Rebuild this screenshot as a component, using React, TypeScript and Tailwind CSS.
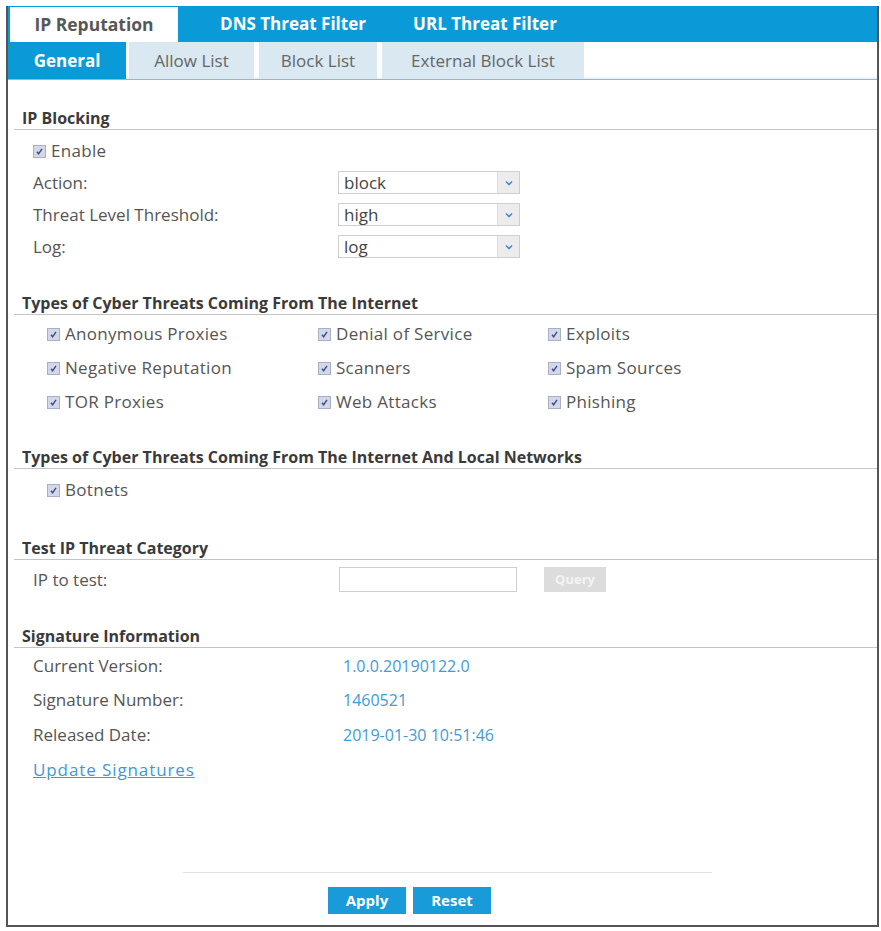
const font = { fontFamily: '"Open Sans", "Liberation Sans", sans-serif' };

const threats = [
  "Anonymous Proxies",
  "Denial of Service",
  "Exploits",
  "Negative Reputation",
  "Scanners",
  "Spam Sources",
  "TOR Proxies",
  "Web Attacks",
  "Phishing",
];

function Check({ label }: { label: string }) {
  return (
    <label className="flex h-[22px] items-center gap-[5px] text-[17px] tracking-[0.3px] text-[#555]">
      <span className="flex h-[13px] w-[13px] items-center justify-center border border-[#a8b0c6] bg-[#d3d8e8]">
        <svg width="9" height="9" viewBox="0 0 9 9">
          <path d="M2 4.8 L3.6 6.8 L7 1.8" fill="none" stroke="#3b4a86" strokeWidth="1.4" />
        </svg>
      </span>
      {label}
    </label>
  );
}

function Select({ value }: { value: string }) {
  return (
    <div className="flex h-[23px] w-[182px] border border-[#cfcfcf] bg-white">
      <div className="flex flex-1 items-center pl-[5px] text-[17px] text-[#444]">{value}</div>
      <div className="flex w-[22px] items-center justify-center border-l border-[#dedede] bg-[#ececec]">
        <svg width="8" height="6" viewBox="0 0 8 6">
          <path d="M1 1.5 L4 4.5 L7 1.5" fill="none" stroke="#3c8fd0" strokeWidth="1.6" />
        </svg>
      </div>
    </div>
  );
}

function Heading({ title, top }: { title: string; top: string }) {
  return (
    <div className={`${top} ml-[6px] flex h-[20px] items-end border-b border-[#c4c4c4] pb-[1px] pl-[8px] text-[16px] font-bold leading-[19px] text-[#3a3a3a]`}>
      {title}
    </div>
  );
}

function InfoRow({ label, value, top }: { label: string; value: string; top: string }) {
  return (
    <div className={`${top} flex h-[22px] items-center pl-[25px] text-[17px]`}>
      <span className="w-[310px] text-[#555]">{label}</span>
      <span className="text-[16px] text-[#3f9bd6]">{value}</span>
    </div>
  );
}

export default function App() {
  return (
    <div className="h-[931px] w-[881px] overflow-hidden bg-white pt-[6px]" style={font}>
      <div className="ml-[6px] flex h-[921px] w-[873px] flex-col border-x-2 border-b-2 border-[#555]">
        {/* top tabs */}
        <div className="flex h-[36px] bg-[#0b9ad8]">
          <div className="ml-[2px] mt-[1px] flex w-[168px] items-center justify-center bg-white text-[17.5px] font-bold text-[#575757]">
            IP Reputation
          </div>
          <div className="flex w-[230px] items-center justify-center text-[17px] font-bold text-white">
            DNS Threat Filter
          </div>
          <div className="flex w-[154px] items-center justify-center text-[17px] font-bold text-white">
            URL Threat Filter
          </div>
        </div>

        {/* sub tabs */}
        <div className="flex h-[38px] border-b border-[#9fb3c2] shadow-[inset_0_-3px_3px_-2px_#d7ecf7]">
          <div className="flex w-[118px] items-center justify-center bg-[#0b9ad8] text-[17px] font-bold text-white">
            General
          </div>
          <div className="ml-[3px] flex w-[125px] items-center justify-center bg-[#dae8f2] text-[17px] text-[#666]">
            Allow List
          </div>
          <div className="ml-[5px] flex w-[118px] items-center justify-center bg-[#dae8f2] text-[17px] text-[#666]">
            Block List
          </div>
          <div className="ml-[5px] flex w-[202px] items-center justify-center bg-[#dae8f2] text-[17px] text-[#666]">
            External Block List
          </div>
        </div>

        <Heading title="IP Blocking" top="mt-[30px]" />
        <div className="mt-[10px] pl-[25px]">
          <Check label="Enable" />
        </div>
        {[
          ["Action:", "block"],
          ["Threat Level Threshold:", "high"],
          ["Log:", "log"],
        ].map(([label, value]) => (
          <div key={label} className="mt-[9px] flex h-[23px] items-center pl-[25px] text-[17px] text-[#555]">
            <span className="w-[305px]">{label}</span>
            <Select value={value} />
          </div>
        ))}

        <Heading title="Types of Cyber Threats Coming From The Internet" top="mt-[37px]" />
        <div className="mt-[8px] grid grid-cols-[271px_230px_200px] gap-y-[12px] pl-[39px]">
          {threats.map((t) => (
            <Check key={t} label={t} />
          ))}
        </div>

        <Heading title="Types of Cyber Threats Coming From The Internet And Local Networks" top="mt-[36px]" />
        <div className="mt-[10px] pl-[39px]">
          <Check label="Botnets" />
        </div>

        <Heading title="Test IP Threat Category" top="mt-[39px]" />
        <div className="mt-[7px] flex h-[25px] items-center pl-[25px] text-[17px] text-[#555]">
          <span className="w-[306px]">IP to test:</span>
          <div className="h-[25px] w-[178px] border border-[#cfcfcf] bg-white" />
          <div className="ml-[27px] flex h-[25px] w-[62px] items-center justify-center bg-[#dcdcdc] text-[13px] font-bold text-[#f4f4f4]">
            Query
          </div>
        </div>

        <Heading title="Signature Information" top="mt-[36px]" />
        <InfoRow label="Current Version:" value="1.0.0.20190122.0" top="mt-[7px]" />
        <InfoRow label="Signature Number:" value="1460521" top="mt-[12px]" />
        <InfoRow label="Released Date:" value="2019-01-30 10:51:46" top="mt-[13px]" />
        <div className="mt-[13px] flex h-[22px] items-center pl-[25px]">
          <a className="text-[17px] tracking-[0.9px] text-[#3a9ad6] underline">Update Signatures</a>
        </div>

        <div className="ml-[175px] mt-[91px] h-px w-[529px] bg-[#e2e2e2]" />
        <div className="mt-[14px] flex gap-[7px] pl-[320px]">
          <button className="h-[27px] w-[78px] bg-[#189bd8] text-[15px] font-bold text-white">Apply</button>
          <button className="h-[27px] w-[78px] bg-[#189bd8] text-[15px] font-bold text-white">Reset</button>
        </div>
      </div>
    </div>
  );
}
